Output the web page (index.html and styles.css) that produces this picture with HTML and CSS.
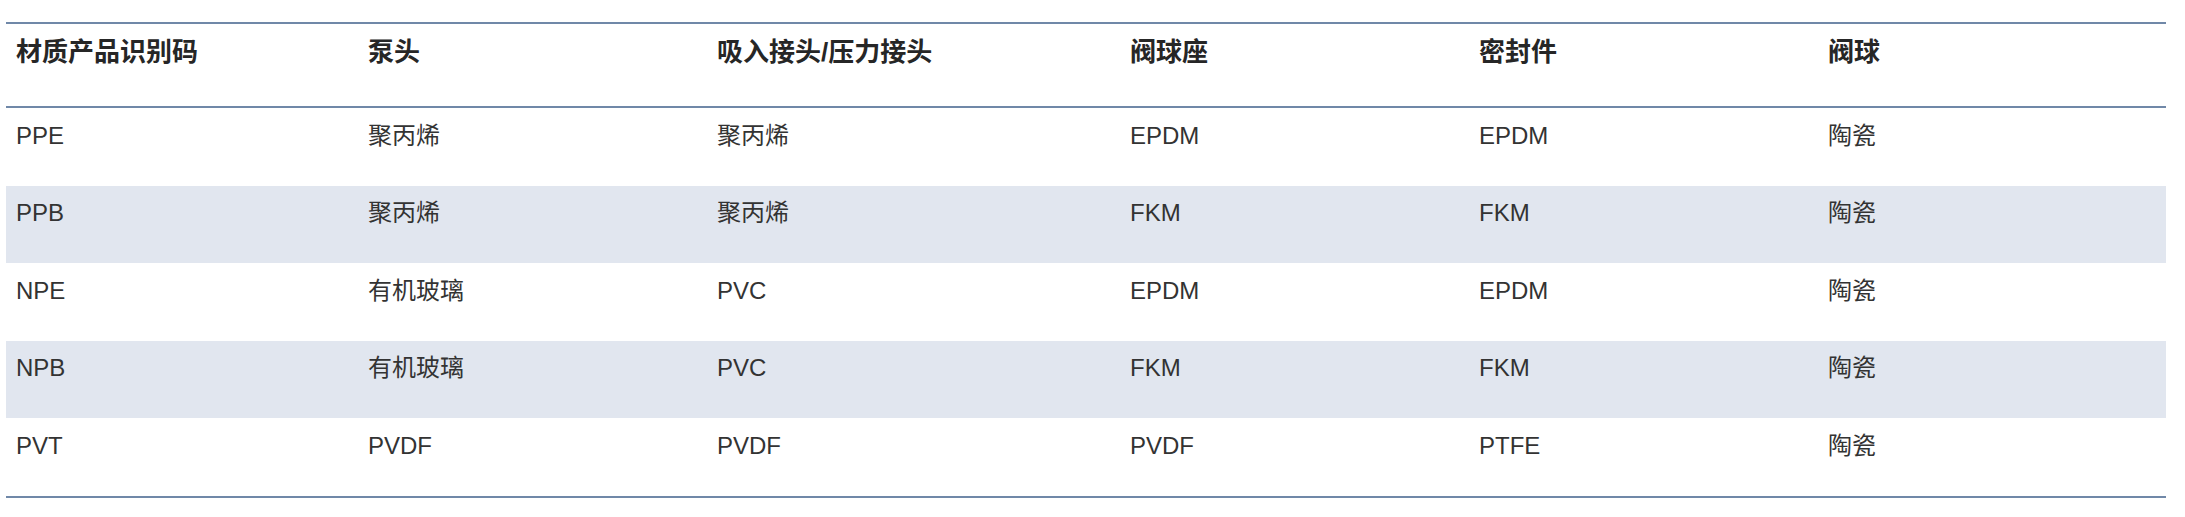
FILE: index.html
```html
<!DOCTYPE html>
<html lang="zh-CN">
<head>
<meta charset="utf-8">
<title>材质产品识别码</title>
<link rel="stylesheet" href="styles.css">
</head>
<body>
<div class="wrap">
  <table class="mat">
    <colgroup>
      <col class="c1"><col class="c2"><col class="c3"><col class="c4"><col class="c5"><col class="c6">
    </colgroup>
    <thead>
      <tr><th>材质产品识别码</th><th>泵头</th><th>吸入接头/压力接头</th><th>阀球座</th><th>密封件</th><th>阀球</th></tr>
    </thead>
    <tbody>
      <tr><td>PPE</td><td>聚丙烯</td><td>聚丙烯</td><td>EPDM</td><td>EPDM</td><td>陶瓷</td></tr>
      <tr class="alt"><td>PPB</td><td>聚丙烯</td><td>聚丙烯</td><td>FKM</td><td>FKM</td><td>陶瓷</td></tr>
      <tr><td>NPE</td><td>有机玻璃</td><td>PVC</td><td>EPDM</td><td>EPDM</td><td>陶瓷</td></tr>
      <tr class="alt"><td>NPB</td><td>有机玻璃</td><td>PVC</td><td>FKM</td><td>FKM</td><td>陶瓷</td></tr>
      <tr><td>PVT</td><td>PVDF</td><td>PVDF</td><td>PVDF</td><td>PTFE</td><td>陶瓷</td></tr>
    </tbody>
  </table>
</div>
</body>
</html>
```
FILE: styles.css
```css
html, body {
  margin: 0;
  padding: 0;
  background: #ffffff;
}
.wrap {
  padding: 22px 0 0 6px;
}
.mat {
  width: 2160px;
  border-collapse: collapse;
  table-layout: fixed;
  font-family: "Liberation Sans", "Noto Sans CJK SC", sans-serif;
  color: #333333;
  border-top: 2px solid #7088a8;
  border-bottom: 2px solid #7088a8;
}
.c1 { width: 352px; }
.c2 { width: 349px; }
.c3 { width: 413px; }
.c4 { width: 349px; }
.c5 { width: 349px; }
.c6 { width: 348px; }
.mat th {
  text-align: left;
  vertical-align: top;
  font-size: 26px;
  font-weight: 700;
  line-height: 38px;
  color: #262626;
  padding: 9px 10px 35px 10px;
  border-bottom: 2px solid #7088a8;
}
.mat td {
  text-align: left;
  vertical-align: top;
  font-size: 24px;
  font-weight: 400;
  line-height: 36px;
  padding: 9.5px 10px 32.1px 10px;
}
.mat tr.alt td {
  background: #e1e6ef;
}
```
